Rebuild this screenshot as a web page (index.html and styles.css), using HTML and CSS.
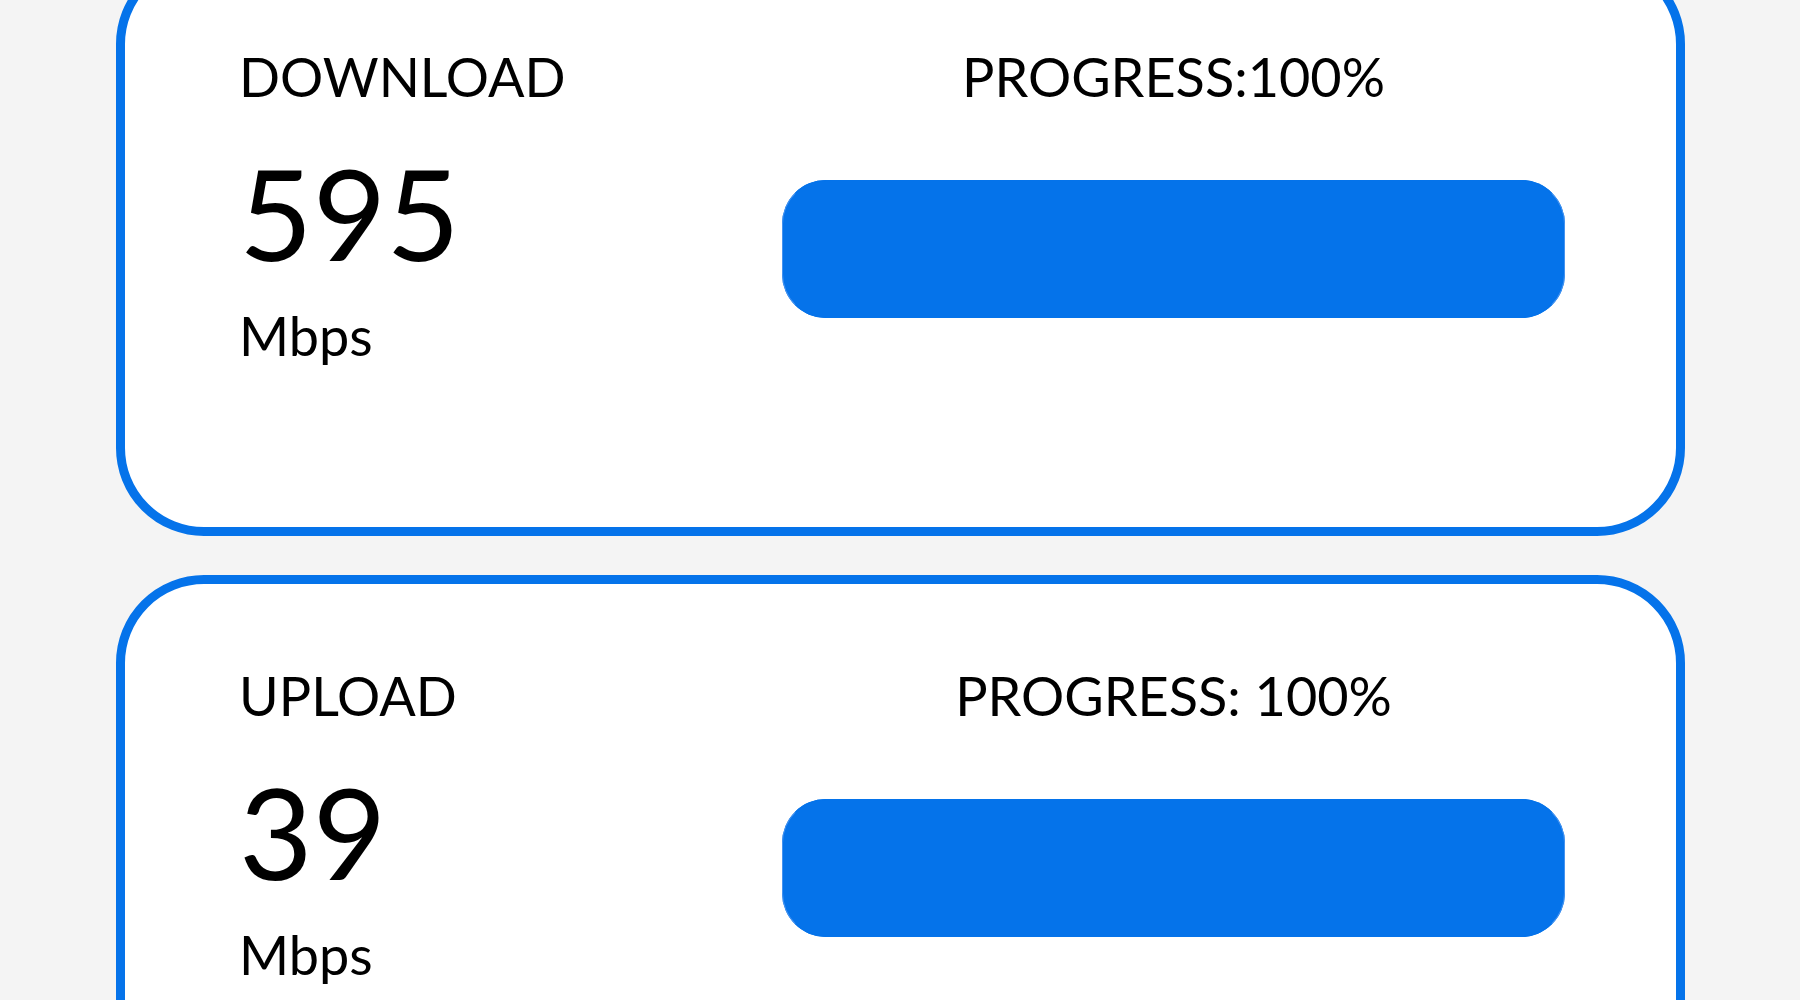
FILE: index.html
```html
<!DOCTYPE html>
<html lang="en">
<head>
<meta charset="utf-8">
<title>Speed test</title>
<link rel="stylesheet" href="styles.css">
</head>
<body>
<main class="page">
  <section class="card">
    <div class="metric">
      <div class="label">DOWNLOAD</div>
      <div class="value">595</div>
      <div class="unit">Mbps</div>
    </div>
    <div class="progress">
      <div class="progress-label">PROGRESS:100%</div>
      <div class="track"><div class="fill" style="width: 100%"></div></div>
    </div>
  </section>
  <section class="card">
    <div class="metric">
      <div class="label">UPLOAD</div>
      <div class="value">39</div>
      <div class="unit">Mbps</div>
    </div>
    <div class="progress">
      <div class="progress-label">PROGRESS: 100%</div>
      <div class="track"><div class="fill" style="width: 100%"></div></div>
    </div>
  </section>
</main>
</body>
</html>
```
FILE: styles.css
```css
html, body {
  margin: 0;
  padding: 0;
  background: #f4f4f4;
  overflow: hidden;
}

body {
  font-family: "Lato", "Noto Sans", sans-serif;
  color: #000;
}

.page {
  display: flex;
  flex-direction: column;
  gap: 39px;
  margin-top: -44px;
  padding-left: 116px;
  width: 1569px;
}

.card {
  box-sizing: border-box;
  height: 580px;
  background: #fff;
  border: 9px solid #0573ea;
  border-radius: 88px;
  padding: 80px 111px 0 114px;
  display: grid;
  grid-template-columns: 1fr 783px;
  align-items: start;
}

.metric {
  display: flex;
  flex-direction: column;
}

.label,
.unit,
.progress-label {
  font-size: 54px;
  line-height: 64px;
  font-weight: 400;
}

.value {
  font-size: 127px;
  line-height: 154px;
  margin-top: 26px;
}

.unit {
  margin-top: 15px;
}

.progress {
  display: flex;
  flex-direction: column;
  align-items: stretch;
}

.progress-label {
  text-align: center;
}

.track {
  margin-top: 71px;
  height: 138px;
  border-radius: 44px;
  background: #0573ea;
  display: flex;
}

.fill {
  box-sizing: border-box;
  height: 100%;
  border-radius: 44px;
  background: #0573ea;
  border: 1px solid #4593f0;
  border-top-color: #0573ea;
  border-bottom-color: #0573ea;
}
```
